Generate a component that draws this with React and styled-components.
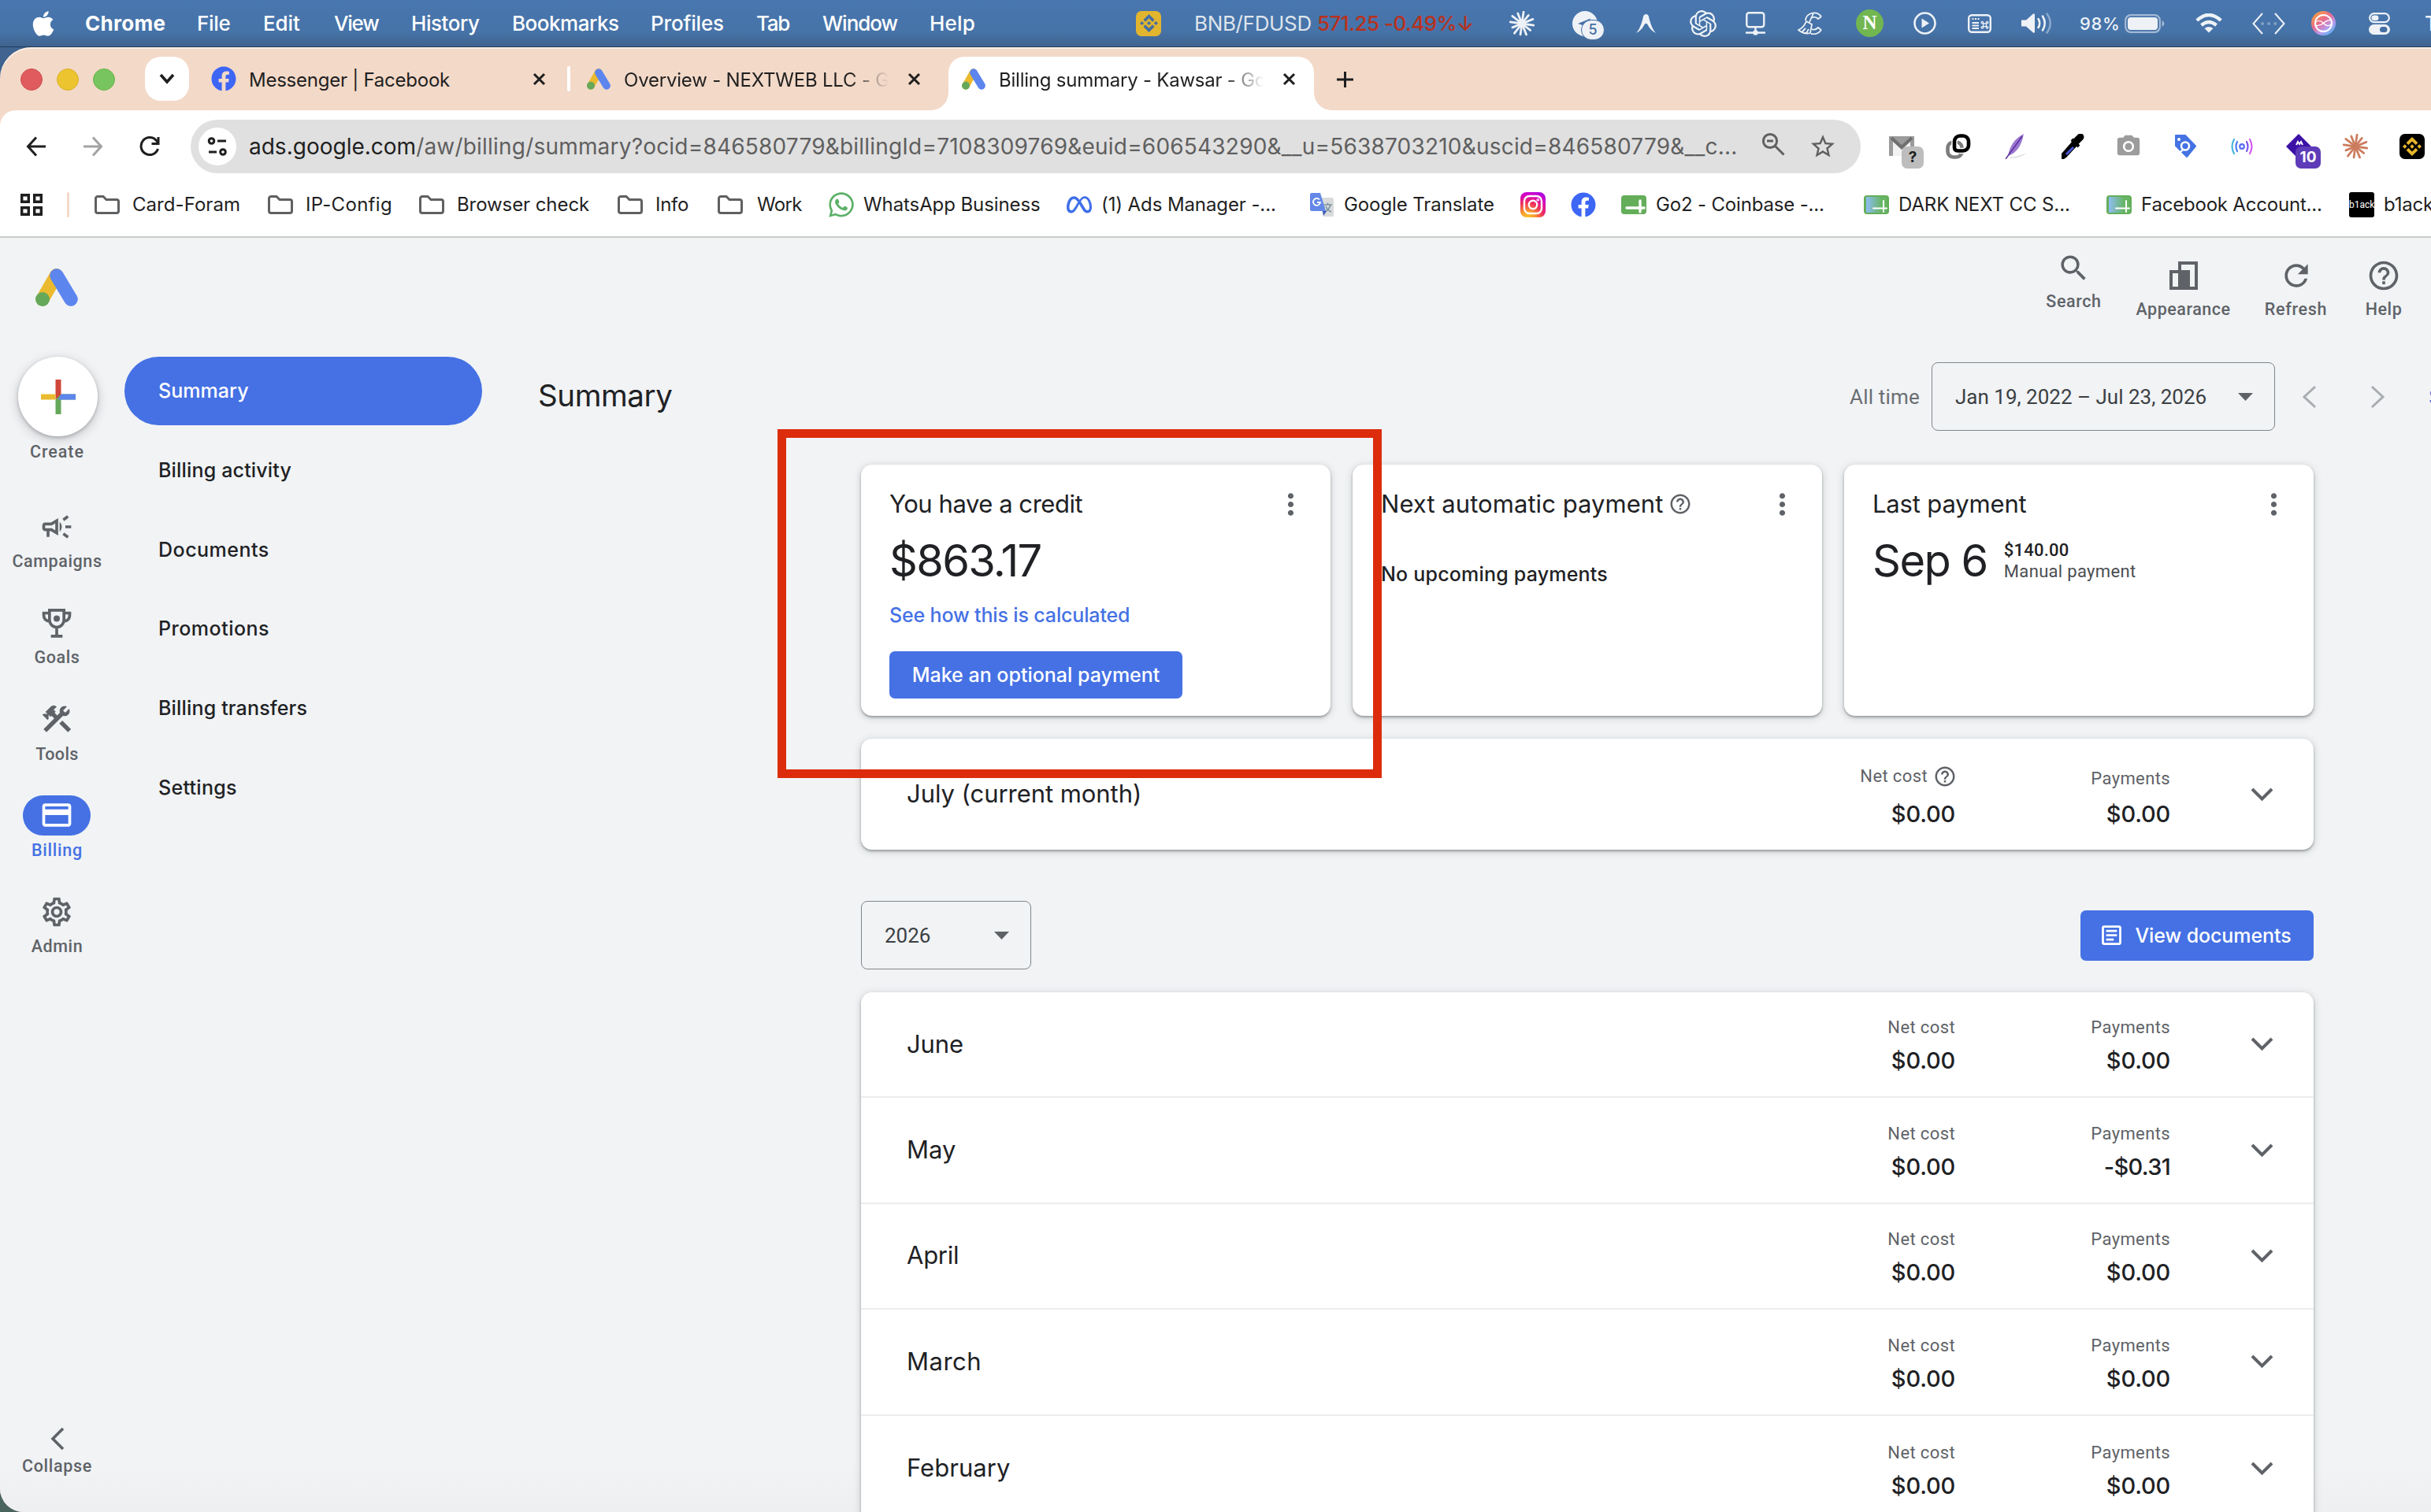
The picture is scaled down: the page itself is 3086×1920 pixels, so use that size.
import React from "react";
import styled, { createGlobalStyle, css } from "styled-components";
import { FaApple, FaFacebook, FaWhatsapp } from "react-icons/fa";
import { FaMeta } from "react-icons/fa6";
import { SiOpenai, SiBinance } from "react-icons/si";
import {
  MdOutlineCampaign, MdConstruction, MdCreditCard, MdOutlineSettings, MdHelpOutline, MdSearch, MdRefresh,
  MdMoreVert, MdPhotoCamera, MdOutlineArticle, MdStarBorder,
} from "react-icons/md";

const sans = `Inter, "Liberation Sans", sans-serif`;
const roboto = `Roboto, "Liberation Sans", sans-serif`;
const blue = "#4571e4";
const ink = "#202124";
const grey = "#5f6368";

const Global = createGlobalStyle`
  * { box-sizing: border-box; }
  html, body { margin: 0; padding: 0; overflow: hidden; }
  svg { display: block; flex: none; }
`;

const Text = styled.span`
  font-family: ${(p) => (p.$roboto ? roboto : sans)};
  font-size: ${(p) => p.$size}px;
  font-weight: ${(p) => p.$weight || 400};
  color: ${(p) => p.$color || ink};
  letter-spacing: ${(p) => p.$ls || 0}px;
  line-height: ${(p) => p.$lh || 30}px;
  white-space: pre;
  flex: none;
`;

const Desktop = styled.div`
  width: 3086px;
  height: 1920px;
  overflow: hidden;
  display: flex;
  flex-direction: column;
  background: linear-gradient(#4876ae 0, #4673a8 40px, #40648f 58px, #3f6290 200px, #4d6b66 1860px, #48645c 1920px);
`;

/* ---------- menu bar ---------- */
const MenuBar = styled.div`
  height: 60px;
  flex: none;
  display: flex;
  align-items: center;
  padding-left: 37px;
  border-bottom: 1px solid #1f3a5e;
`;
const Slot = styled.div`
  width: ${(p) => p.$w}px;
  padding-top: ${(p) => p.$top || 0}px;
  flex: none;
  display: flex;
  align-items: center;
`;
const BadgeHost = styled.div`
  position: relative;
  width: 32px;
  height: 32px;
`;
const CountBubble = styled.span`
  position: absolute;
  left: 11px;
  top: 11px;
  width: 30px;
  height: 26px;
  border-radius: 13px;
  border: 1px solid #456ea2;
  background: #eef2f7;
  color: #47709f;
  font: 500 18px/24px ${sans};
  text-align: center;
`;
const GreenDot = styled.span`
  width: 35px;
  height: 35px;
  border-radius: 50%;
  background: #72b651;
  color: #fff;
  font: 700 25px/34px "Liberation Serif", serif;
  text-align: center;
`;

/* ---------- browser chrome ---------- */
const Window = styled.div`
  flex: 1;
  min-height: 0;
  display: flex;
  flex-direction: column;
  border-radius: 40px 0 0 30px;
  overflow: hidden;
  background: #f3d9c8;
  box-shadow: inset 0 2px 0 #fbeee5;
`;
const TabStrip = styled.div`
  height: 80px;
  flex: none;
  display: flex;
  align-items: center;
  padding-left: 26px;
`;
const Lights = styled.div`
  display: flex;
  gap: 18px;
  padding-top: 2px;
  margin-right: 38px;
`;
const Light = styled.span`
  width: 28px;
  height: 28px;
  border-radius: 50%;
  background: ${(p) => p.$c};
  border: 1px solid ${(p) => p.$b};
`;
const TabMenu = styled.div`
  width: 56px;
  height: 56px;
  border-radius: 20px;
  background: #fff;
  display: flex;
  align-items: center;
  justify-content: center;
`;
const Tab = styled.div`
  width: ${(p) => p.$w}px;
  height: 68px;
  flex: none;
  align-self: flex-end;
  display: flex;
  align-items: center;
  padding: 0 ${(p) => p.$pr}px 12px ${(p) => p.$pl}px;
  ${(p) => p.$active && css`
    position: relative;
    background: #fff;
    border-radius: 20px 20px 0 0;
    &::before, &::after {
      content: "";
      position: absolute;
      bottom: 0;
      width: 22px;
      height: 22px;
    }
    &::before { left: -22px; background: radial-gradient(circle at 0 0, transparent 21.5px, #fff 22px); }
    &::after { right: -22px; background: radial-gradient(circle at 100% 0, transparent 21.5px, #fff 22px); }
  `}
`;
const TabTitle = styled.div`
  flex: 1;
  min-width: 0;
  overflow: hidden;
  padding-top: 4px;
  margin-left: ${(p) => p.$ml}px;
  margin-right: ${(p) => p.$mr}px;
  ${(p) => p.$fade && css`mask-image: linear-gradient(90deg, #000 calc(100% - 50px), transparent);`}
`;
const TabSep = styled.span`
  width: 4px;
  height: 32px;
  border-radius: 2px;
  background: #fff;
`;
const Toolbar = styled.div`
  height: 80px;
  flex: none;
  background: #fff;
  border-radius: 20px 0 0 0;
  display: flex;
  align-items: center;
  padding: 12px 0 0 33px;
`;
const NavButtons = styled.div`
  display: flex;
  gap: 46px;
  width: 209px;
`;
const Omnibox = styled.div`
  width: 2120px;
  height: 68px;
  flex: none;
  border-radius: 34px;
  background: #e0e0e0;
  display: flex;
  align-items: center;
  padding-left: 10px;
`;
const SiteInfo = styled.span`
  width: 48px;
  height: 48px;
  flex: none;
  border-radius: 50%;
  background: #fff;
  display: flex;
  align-items: center;
  justify-content: center;
  margin-right: 16px;
`;
const UrlText = styled.div`
  width: 1920px;
  flex: none;
  display: flex;
`;
const OmniActions = styled.div`
  display: flex;
  gap: 28px;
`;
const Extensions = styled.div`
  display: flex;
  gap: 40px;
  margin-left: 36px;
`;
const ExtIcon = styled.div`
  position: relative;
  width: 32px;
  height: 32px;
  flex: none;
  display: flex;
  align-items: center;
  justify-content: center;
  border-radius: ${(p) => (p.$bg ? 7 : 0)}px;
  background: ${(p) => p.$bg || "none"};
`;
const ExtBadge = styled.span`
  position: absolute;
  left: ${(p) => p.$x}px;
  top: 16px;
  width: ${(p) => p.$w}px;
  height: 28px;
  border-radius: 7px;
  background: ${(p) => p.$bg};
  color: ${(p) => p.$c};
  font: 700 19px/28px ${sans};
  text-align: center;
`;
const Bookmarks = styled.div`
  height: 82px;
  flex: none;
  background: #fff;
  border-bottom: 2px solid #c9ccca;
  display: flex;
  align-items: center;
  padding-left: 26px;
`;
const BookmarkSep = styled.span`
  width: 3px;
  height: 32px;
  flex: none;
  border-radius: 2px;
  background: #f3d9c8;
  margin: 0 32px 0 31px;
`;
const Bookmark = styled.div`
  width: ${(p) => p.$w}px;
  flex: none;
  display: flex;
  align-items: center;
  gap: ${(p) => p.$gap}px;
`;
const BookmarkGlyph = styled.span`
  width: 32px;
  flex: none;
  display: flex;
  justify-content: center;
`;
const BlackIcon = styled.span`
  width: 32px;
  height: 32px;
  border-radius: 3px;
  background: #000;
  color: #fff;
  font: 400 12px/32px ${roboto};
  text-align: center;
  flex: none;
`;
const InstaIcon = styled.span`
  width: 32px;
  height: 32px;
  border-radius: 8px;
  background: radial-gradient(circle at 28% 105%, #fdc830 0, #f8a12c 22%, #ee2f5c 50%, #d300c5 75%, #7a1bff 108%);
  flex: none;
`;

/* ---------- page ---------- */
const Page = styled.div`
  flex: 1;
  min-height: 0;
  background: linear-gradient(#f1f3f5 0, #f1f3f5 calc(100% - 60px), #eeeff1);
  display: flex;
  flex-direction: column;
`;
const PageHeader = styled.div`
  height: 151px;
  flex: none;
  display: flex;
  justify-content: space-between;
  padding: 17px 0 0 45px;
`;
const LogoBox = styled.div`
  padding-top: 22px;
`;
const HeaderActions = styled.div`
  display: flex;
  width: 501px;
`;
const HeaderAction = styled.div`
  width: ${(p) => p.$w}px;
  padding-top: ${(p) => p.$top || 0}px;
  flex: none;
  display: flex;
  flex-direction: column;
  align-items: center;
  gap: 7px;
`;
const Body = styled.div`
  flex: 1;
  min-height: 0;
  display: flex;
`;
const Rail = styled.div`
  width: 158px;
  flex: none;
  padding-right: 13px;
  display: flex;
  flex-direction: column;
  align-items: center;
`;
const CreateButton = styled.div`
  width: 101px;
  height: 101px;
  flex: none;
  margin: 0 0 6px 2px;
  border-radius: 50%;
  background: #fff;
  box-shadow: 0 2px 4px rgba(60, 64, 67, 0.3), 0 4px 12px 3px rgba(60, 64, 67, 0.16);
  display: flex;
  align-items: center;
  justify-content: center;
`;
const RailItem = styled.div`
  height: 122.3px;
  display: flex;
  flex-direction: column;
  align-items: center;
  gap: 5px;
`;
const RailIcon = styled.span`
  width: 86px;
  height: 51px;
  border-radius: 26px;
  background: ${(p) => (p.$on ? blue : "none")};
  color: ${(p) => (p.$on ? "#fff" : grey)};
  display: flex;
  align-items: center;
  justify-content: center;
`;
const RailItems = styled.div`
  padding-top: 55px;
`;
const Collapse = styled.div`
  margin-top: auto;
  padding-bottom: 44px;
  display: flex;
  flex-direction: column;
  align-items: center;
  gap: 6px;
`;
const SideNav = styled.nav`
  width: 454px;
  flex: none;
  display: flex;
  flex-direction: column;
  gap: 13.8px;
`;
const SideLink = styled.a`
  height: 87px;
  flex: none;
  border-radius: 44px;
  background: ${(p) => (p.$on ? blue : "none")};
  display: flex;
  align-items: center;
  padding: 0 0 1px 43px;
`;
const Main = styled.main`
  flex: 1;
  min-width: 0;
  padding: 7px 0 0 71px;
`;
const TitleRow = styled.div`
  height: 87px;
  display: flex;
  align-items: center;
  justify-content: space-between;
`;
const PageTitle = styled.div`
  display: flex;
  padding-bottom: 4px;
`;
const RangeTools = styled.div`
  width: 738px;
  flex: none;
  display: flex;
  align-items: center;
`;
const Select = styled.div`
  width: ${(p) => p.$w}px;
  height: 87px;
  flex: none;
  border: 1.5px solid #80868b;
  border-radius: 8px;
  display: flex;
  align-items: center;
  justify-content: space-between;
  padding: 0 27px 0 29px;
`;
const Pager = styled.div`
  display: flex;
  width: 161px;
  gap: 68px;
  margin-left: 34px;
  flex: none;
`;
const Content = styled.div`
  position: relative;
  margin: 43px 0 0 410px;
  width: 1844px;
`;
const shadow = css`
  background: #fff;
  border-radius: 14px;
  box-shadow: 0 2px 3px rgba(60, 64, 67, 0.42), 0 2px 8px 2px rgba(60, 64, 67, 0.15);
`;
const Cards = styled.div`
  display: grid;
  grid-template-columns: repeat(3, 596px);
  gap: 28px;
`;
const Card = styled.section`
  ${shadow}
  height: 319px;
  padding: 30px 29px 0 36px;
`;
const CardHead = styled.div`
  height: 40px;
  display: flex;
  align-items: center;
  justify-content: space-between;
  color: ${grey};
`;
const WithHelp = styled.div`
  display: flex;
  align-items: center;
  gap: ${(p) => p.$gap}px;
  margin-right: ${(p) => p.$mr || 0}px;
  color: ${grey};
`;
const Block = styled.div`
  display: flex;
  margin-top: ${(p) => p.$mt}px;
`;
const PrimaryButton = styled.div`
  width: ${(p) => p.$w}px;
  height: ${(p) => p.$h}px;
  margin-top: ${(p) => p.$mt || 0}px;
  padding-right: ${(p) => p.$pr || 0}px;
  border-radius: 7px;
  background: ${blue};
  color: #fff;
  display: flex;
  align-items: center;
  justify-content: center;
  gap: 14px;
`;
const PaidDetail = styled.div`
  display: flex;
  flex-direction: column;
  padding: 3px 0 0 21px;
`;
const MonthPanel = styled.section`
  ${shadow}
  margin-top: 29px;
`;
const MonthRow = styled.div`
  height: ${(p) => p.$h}px;
  display: flex;
  align-items: center;
  padding-left: 58px;
  &:not(:last-child) {
    border-bottom: 2px solid #ececee;
  }
`;
const MonthName = styled.div`
  flex: 1;
  padding-bottom: 1px;
`;
const Figure = styled.div`
  width: 273px;
  height: 100%;
  padding-bottom: 25px;
  display: flex;
  flex-direction: column;
  justify-content: flex-end;
  align-items: flex-end;
  gap: ${(p) => p.$gap}px;
`;
const Expand = styled.div`
  width: 182px;
  padding-left: 102px;
`;
const YearRow = styled.div`
  height: 87px;
  margin-top: 65px;
  display: flex;
  align-items: center;
  justify-content: space-between;
`;
const Highlight = styled.div`
  position: absolute;
  left: -106px;
  top: -45px;
  width: 767px;
  height: 443px;
  border: 11px solid #dc2c0c;
`;

/* ---------- drawings ---------- */
const Svg = ({ w, h = w, vb, children, ...r }) => (
  <svg width={w} height={h} viewBox={vb || `0 0 ${w} ${h}`} fill="none" {...r}>{children}</svg>
);
const AdsLogo = ({ w, h }) => (
  <Svg w={w} h={h} vb="0 0 54 48">
    <path d="M26.5 8.5 9 39" stroke="#ebba2f" strokeWidth="17" strokeLinecap="round" />
    <circle cx="9" cy="39" r="9" fill="#66a85a" />
    <path d="M27 9 45 39" stroke="#5c85ee" strokeWidth="17.5" strokeLinecap="round" />
  </Svg>
);
const rays = [15, 13.5, 15, 14, 15.5, 13, 15, 15.5, 14, 15, 13.5, 15];
const Burst = ({ color }) => (
  <Svg w={32}>
    {rays.map((r, i) => {
      const a = ((i * 30 + 8) * Math.PI) / 180;
      return <line key={i} x1="16" y1="16" x2={16 + r * Math.cos(a)} y2={16 + r * Math.sin(a)} stroke={color} strokeWidth="2.8" strokeLinecap="round" />;
    })}
  </Svg>
);
const Chevron = ({ w, h, d, c = grey, s = 4 }) => (
  <Svg w={w} h={h} stroke={c} strokeWidth={s}><path d={d} /></Svg>
);
const Down = () => <Chevron w={29} h={18} d="M2 2 14.5 14.5 27 2" />;
const Close = () => <Chevron w={17} h={17} c="#1f1f1f" s={3} d="M2 2 15 15M15 2 2 15" />;
const Caret = () => <Svg w={19} h={10}><path d="M0 0H19L9.5 10Z" fill={grey} /></Svg>;
const Folder = () => (
  <Svg w={32} h={24} stroke="#5f6062" strokeWidth="3">
    <path d="M1.5 4A2.5 2.5 0 0 1 4 1.5H11L15 5.5H28A2.5 2.5 0 0 1 30.5 8V20A2.5 2.5 0 0 1 28 22.5H4A2.5 2.5 0 0 1 1.5 20Z" />
  </Svg>
);
const Sheet = ({ tint }) => (
  <Svg w={32} h={24}>
    <defs><linearGradient id="tint"><stop stopColor="#8fbdf5" /><stop offset=".75" stopColor="#66b565" /></linearGradient></defs>
    <rect width="32" height="24" rx="4" fill="#64ae5a" />
    {tint && <rect x="3" y="2" width="26" height="20" fill="url(#tint)" />}
    <path d={tint ? "M12 16.5H29M25 7V21" : "M7 16H29M24 7V21"} stroke="#fff" strokeWidth={tint ? 2 : 3.4} strokeLinecap="round" />
  </Svg>
);

const menus = [
  ["File", 84, -0.3], ["Edit", 90, -0.1], ["View", 98, -1.2], ["History", 128, -0.45], ["Bookmarks", 176, -0.48],
  ["Profiles", 134, -0.18], ["Tab", 84, -1.3], ["Window", 136, -1], ["Help", 262, 0.2],
];

const StatusIcons = () => (
  <>
    <Slot $w={80}><Burst color="#eef2f7" /></Slot>
    <Slot $w={81}>
      <BadgeHost>
        <Svg w={32}><circle cx="16" cy="16" r="16" fill="#eef2f7" /><path d="M7 16 23 9.5 20 21 13 18Z" fill="#456ea2" /></Svg>
        <CountBubble>5</CountBubble>
      </BadgeHost>
    </Slot>
    <Slot $w={68}><Svg w={25} h={24}><path d="M0 24C5 19 8 8 9 3Q10 0 12.5 0T16 3C17 8 20 19 25 24C20 21.5 17 18 15 14Q12.5 9.5 10 14C8 18 5 21.5 0 24Z" fill="#eef2f7" /></Svg></Slot>
    <Slot $w={71}><SiOpenai size={34} color="#eef2f7" /></Slot>
    <Slot $w={66}>
      <Svg w={25} h={30} stroke="#eef2f7" strokeWidth="2.4"><rect x="1.3" y="1.3" width="22" height="18" rx="3" /><path d="M12.5 19.5V26M0 26.5H25" /><circle cx="12.5" cy="26.5" r="2" fill="#eef2f7" /></Svg>
    </Slot>
    <Slot $w={74}>
      <Svg w={32} h={29} stroke="#eef2f7" strokeWidth="1.8">
        <path d="M30 6C27 2 22 .5 17 2C12 4 10 8 10 11M30 6 26 9C23 6 20 6 17 8M30 23C27 27 22 29 17 28M30 23 26 20C23 23 20 23 18 22" />
        <path d="M20 2 15 13M11 12 18 16 16 27Q8 29 1 23Q8 20 11 12ZM6 25 10 21M11 27 14 22" />
      </Svg>
    </Slot>
    <Slot $w={73}><GreenDot>N</GreenDot></Slot>
    <Slot $w={69}><Svg w={29}><circle cx="14.5" cy="14.5" r="13" stroke="#eef2f7" strokeWidth="2.6" /><path d="M10.5 8.5V20.5L20 14.5Z" fill="#eef2f7" /></Svg></Slot>
    <Slot $w={68}>
      <Svg w={30} h={24} stroke="#eef2f7" strokeWidth="2">
        <rect x="1.2" y="1.2" width="27.6" height="21.6" rx="4" strokeWidth="2.4" />
        <path d="M5.5 6H15" strokeDasharray="2 1.5" /><path d="M5.5 11H14M5.5 14.5H14M5.5 18H14" />
        <path d="M19.6 11.8H23.4V15.6H19.6Z" strokeWidth="1.3" />
        <path d="M19.6 11.8H18.6A1.2 1.2 0 1 1 19.6 10.6ZM23.4 11.8V10.6A1.2 1.2 0 1 1 24.6 11.8ZM19.6 15.6V16.8A1.2 1.2 0 1 1 18.4 15.6ZM23.4 15.6H24.6A1.2 1.2 0 1 1 23.4 16.8Z" strokeWidth="1.3" />
      </Svg>
    </Slot>
    <Slot $w={74}>
      <Svg w={40} h={27}><path d="M0 9.5H6L15 1.5Q17 .5 17 3V24Q17 26.5 15 25.5L6 17.5H0Z" fill="#eef2f7" /><path d="M21.5 8Q25 13.5 21.5 19M27 4.5Q32.5 13.5 27 22.5" stroke="#eef2f7" strokeWidth="2.6" strokeLinecap="round" /><path d="M32.5 1.5Q41 13.5 32.5 25.5" stroke="#8aa8cb" strokeWidth="2.6" strokeLinecap="round" /></Svg>
    </Slot>
    <Slot $w={57}><Text $size={22} $weight={500} $color="#eef2f7" $ls={0.6}>98%</Text></Slot>
    <Slot $w={90}>
      <Svg w={52} h={24}><rect x="1.2" y="1.2" width="43.6" height="21.6" rx="6.5" stroke="#a3b9d4" strokeWidth="2.2" /><rect x="4" y="4" width="38" height="16" rx="4" fill="#eef2f7" /><path d="M47.5 8V16Q50.5 14.5 50.5 12T47.5 8Z" fill="#a3b9d4" /></Svg>
    </Slot>
    <Slot $w={72}>
      <Svg w={34} h={25} stroke="#eef2f7" strokeWidth="4.4"><path d="M1.8 9Q17-5 32.2 9" /><path d="M7.5 15Q17 7 26.5 15" /><path d="M17 24.5 11.5 19Q17 15 22.5 19Z" fill="#eef2f7" stroke="none" /></Svg>
    </Slot>
    <Slot $w={75}>
      <Svg w={42} h={28} stroke="#eef2f7" strokeWidth="2"><path d="M13 1 1.5 14 13 27M29 1 40.5 14 29 27" /><path d="M13 14H31" stroke="#7f9fc6" strokeWidth="4" strokeLinecap="round" strokeDasharray="0.1 8" /></Svg>
    </Slot>
    <Slot $w={73}>
      <Svg w={31}>
        <defs><linearGradient id="siri" x1=".1" y1=".1" x2=".8" y2="1"><stop stopColor="#f5a13c" /><stop offset=".4" stopColor="#ea6a8f" /><stop offset=".7" stopColor="#b79cf0" /><stop offset="1" stopColor="#53b4ee" /></linearGradient></defs>
        <circle cx="15.5" cy="15.5" r="15.5" fill="url(#siri)" /><circle cx="15.5" cy="15.5" r="10.5" stroke="#fff" strokeWidth="2" />
        <path d="M5.500 14C9 11.500 13 12.500 15.500 15.500S22 20 25.500 17M6 18.500C10 19 13 17.500 15.500 15.500S21 10.500 24.500 12" stroke="#fff" strokeWidth="1.3" />
      </Svg>
    </Slot>
    <Slot $w={71}>
      <Svg w={28}><rect x="1.2" y="1.2" width="24.6" height="11" rx="5.5" stroke="#eef2f7" strokeWidth="2.2" /><rect x="3.5" y="3.5" width="9" height="6.5" rx="3.2" fill="#eef2f7" /><rect x="0" y="15" width="27" height="13" rx="6.5" fill="#eef2f7" /><rect x="14" y="18" width="9.5" height="7" rx="3.5" fill="#456ea2" /></Svg>
    </Slot>
    <Text $size={26} $weight={500} $color="#eef2f7">T</Text>
  </>
);

const bookmarks = [
  ["Card-Foram", 220, "f", 0.05, 16], ["IP-Config", 192, "f", 0.3, 16], ["Browser check", 252, "f", -0.08, 16], ["Info", 127, "f", -0.27, 16], ["Work", 141, "f", -0.7, 18],
  ["WhatsApp Business", 302, "wa", -0.09, 12], ["(1) Ads Manager -...", 308, "meta", -0.1, 12], ["Google Translate", 268, "tr", -0.09, 12], ["", 64, "ig"], ["", 64, "fb"],
  ["Go2 - Coinbase -...", 308, "s", -0.17, 12], ["DARK NEXT CC S...", 308, "st", -0.1, 12], ["Facebook Account...", 308, "st", -0.2, 12], ["b1ack", 110, "b", -0.2, 12],
];
const BookmarkIcon = ({ kind }) => {
  if (kind === "f") return <Folder />;
  if (kind === "wa") return <FaWhatsapp size={36} color="#5cb068" />;
  if (kind === "meta") return <FaMeta size={32} color="#3f6fe8" />;
  if (kind === "fb") return <FaFacebook size={32} color="#3d66f5" />;
  if (kind === "b") return <BlackIcon>b1ack</BlackIcon>;
  if (kind === "ig")
    return <InstaIcon><Svg w={32} stroke="#fff" strokeWidth="2.4"><rect x="5" y="5" width="22" height="22" rx="6.5" /><circle cx="16" cy="16" r="5.2" /><circle cx="22.3" cy="9.7" r=".6" /></Svg></InstaIcon>;
  if (kind === "tr")
    return (
      <Svg w={32}>
        <path d="M12 7H29Q31 7 31 9V29Q31 31 29 31H18Z" fill="#d9dadc" /><path d="M18 16H29M23.5 13.5V16M27 16Q25.5 22 20 25M21 18Q23 23 28 25" stroke="#7a95a0" strokeWidth="1.6" />
        <path d="M17 24H22L18 30Z" fill="#3a56b8" /><path d="M3 1H14L21 24H3Q1 24 1 22V3Q1 1 3 1Z" fill="#6488e8" /><path d="M13 9.5A4.5 4.5 0 1 0 14 13H10" stroke="#fff" strokeWidth="1.8" />
      </Svg>
    );
  return <Sheet tint={kind === "st"} />;
};

const BrowserChrome = () => (
  <>
    <TabStrip>
      <Lights><Light $c="#df5b5e" $b="#cf4a50" /><Light $c="#ecc42f" $b="#d9b02a" /><Light $c="#78c55f" $b="#66b44c" /></Lights>
      <TabMenu><Chevron w={20} h={14} c="#1f1f1f" s={3.6} d="M2 2 10 11 18 2" /></TabMenu>
      <Tab $w={480} $pl={28} $pr={27}>
        <FaFacebook size={32} color="#3d66f5" />
        <TabTitle $ml={16} $mr={10}><Text $size={24} $color="#1f1f1f" $ls={-0.24}>Messenger | Facebook</Text></TabTitle>
        <Close />
      </Tab>
      <TabSep />
      <Tab $w={480} $pl={21} $pr={35}>
        <AdsLogo w={30} h={27} />
        <TabTitle $ml={17} $mr={24} $fade><Text $size={24} $color="#1f1f1f" $ls={-0.2}>Overview - NEXTWEB LLC - Go</Text></TabTitle>
        <Close />
      </Tab>
      <Tab $active $w={464} $pl={17} $pr={23}>
        <AdsLogo w={30} h={27} />
        <TabTitle $ml={17} $mr={24} $fade><Text $size={24} $color="#1f1f1f" $ls={-0.23}>Billing summary - Kawsar - Goo</Text></TabTitle>
        <Close />
      </Tab>
      <Slot $w={80} $top={1}><Svg w={78} h={20} stroke="#1f1f1f" strokeWidth="3"><path d="M29 10H50M39.5 0V20" /></Svg></Slot>
    </TabStrip>
    <Toolbar>
      <NavButtons>
        <Svg w={26} stroke="#1f1f1f" strokeWidth="3"><path d="M13 1.5 2.5 13 13 24.5M2.5 13H25" /></Svg>
        <Svg w={26} stroke="#a3a3a3" strokeWidth="3"><path d="M13 1.5 23.5 13 13 24.5M23.5 13H1" /></Svg>
        <Svg w={26} stroke="#1f1f1f" strokeWidth="3"><path d="M23.5 16A11 11 0 1 1 21.5 5.5L24 9M24 1V9.5H15.5" /></Svg>
      </NavButtons>
      <Omnibox>
        <SiteInfo><Svg w={26} h={24} stroke="#1f1f1f" strokeWidth="3"><circle cx="5.5" cy="5" r="3.3" /><path d="M13 5H24M2 19H12" /><circle cx="20" cy="19" r="3.3" /></Svg></SiteInfo>
        <UrlText>
          <Text $size={28} $lh={40} $color="#1f1f1f">ads.google.com</Text>
          <Text $size={28} $lh={40} $color="#5f5f5f" $ls={0.2}>/aw/billing/summary?ocid=846580779&billingId=7108309769&euid=606543290&__u=5638703210&uscid=846580779&__c...</Text>
        </UrlText>
        <OmniActions>
          <Svg w={32} stroke="#5f5f5f" strokeWidth="3"><circle cx="11" cy="11" r="8.6" /><path d="M7 11H15M17 17 28.5 28.5" /></Svg>
          <MdStarBorder size={36} color="#5f5f5f" />
        </OmniActions>
      </Omnibox>
      <Extensions>
        <ExtIcon><Svg w={32}><rect y="3" width="32" height="25" fill="#9b9b9b" /><path d="M5 28V10L16 20 27 10V28Z" fill="#f2f2f2" /><path d="M3 5 16 17 29 5" stroke="#6f6f6f" strokeWidth="4" /></Svg><ExtBadge $x={16} $w={28} $bg="#bdbdbd" $c="#1f1f1f">?</ExtBadge></ExtIcon>
        <ExtIcon>
          <Svg w={32} strokeWidth="4.6">
            <rect x="2.500" y="10.500" width="18" height="19" rx="7" stroke="#7c7c7c" />
            <path d="M11 16V9.500A7 7 0 0 1 18 2.500H22A7 7 0 0 1 29 9.500V14.500A7 7 0 0 1 22 21.500H18" stroke="#fff" strokeWidth="7.500" />
            <path d="M11 17V9.500A7 7 0 0 1 18 2.500H22A7 7 0 0 1 29 9.500V14.500A7 7 0 0 1 22 21.500H15.500Q11 21.500 11 17" stroke="#000" />
          </Svg>
        </ExtIcon>
        <ExtIcon><Svg w={32}><path d="M27 0C24 16 18 24 7 28C9 16 15 6 27 0Z" fill="#9a78cf" /><path d="M4 32 25 3" stroke="#5d2f9e" strokeWidth="1.5" /><path d="M10 30Q20 29 31 24Q22 31 10 31Z" fill="#d8d8d8" /></Svg></ExtIcon>
        <ExtIcon><Svg w={32}><path d="M3 32V25L17 9 23 15 9 30 6 32Z" fill="#000" /><path d="M8 25 17 16 19 18 10 27Z" fill="#4a58d6" /><path d="M16 7 25 16" stroke="#000" strokeWidth="4" /><path d="M20 11 27 4" stroke="#000" strokeWidth="9" strokeLinecap="round" /></Svg></ExtIcon>
        <ExtIcon><MdPhotoCamera size={34} color="#9c9c9c" /></ExtIcon>
        <ExtIcon><Svg w={32}><path d="M4 2H16L29 15.5 18 29 4 15Z" fill="#4573e3" stroke="#4573e3" strokeWidth="2" strokeLinejoin="round" /><circle cx="8" cy="7" r="2" fill="#fff" /><circle cx="16" cy="15.5" r="5" stroke="#fff" strokeWidth="2.6" /><path d="M13 20 10 23" stroke="#fff" strokeWidth="2.4" /></Svg></ExtIcon>
        <ExtIcon><Svg w={28} h={22} strokeWidth="2.2" strokeLinecap="round"><circle cx="14" cy="11" r="2.8" stroke="#5a6cf0" /><path d="M8 5Q5 11 8 17" stroke="#4b7cf0" /><path d="M4 2Q-1 11 4 20" stroke="#49b7dc" /><path d="M20 5Q23 11 20 17" stroke="#7a55f0" /><path d="M24 2Q29 11 24 20" stroke="#d15cf0" /></Svg></ExtIcon>
        <ExtIcon><Svg w={32}><path d="M16 0 32 16 16 32 0 16Z" fill="#3c11a6" /><path d="M13 14 15 10 17 13 19 10 21 14" stroke="#fff" strokeWidth="2" /></Svg><ExtBadge $x={12} $w={32} $bg="#5e3bb8" $c="#fff">10</ExtBadge></ExtIcon>
        <ExtIcon><Burst color="#cc7d5f" /></ExtIcon>
        <ExtIcon $bg="#000"><SiBinance size={24} color="#e8b62a" /></ExtIcon>
      </Extensions>
    </Toolbar>
    <Bookmarks>
      <Svg w={28} stroke="#1f1f1f" strokeWidth="3.4"><path d="M1.7 1.7H10.3V10.3H1.7ZM17.7 1.7H26.3V10.3H17.7ZM1.7 17.7H10.3V26.3H1.7ZM17.7 17.7H26.3V26.3H17.7Z" /></Svg>
      <BookmarkSep />
      {bookmarks.map(([label, w, kind, ls, gap], i) => (
        <Bookmark key={i} $w={w} $gap={gap || 0}>
          <BookmarkGlyph><BookmarkIcon kind={kind} /></BookmarkGlyph>
          {label && <Text $size={24} $color="#1f1f1f" $ls={ls}>{label}</Text>}
        </Bookmark>
      ))}
    </Bookmarks>
  </>
);

const RailLabel = ({ children, c, ls = 0.6 }) => <Text $roboto $size={21.5} $weight={500} $lh={28} $color={c || grey} $ls={ls}>{children}</Text>;
const Trophy = () => (
  <Svg w={44} vb="0 0 24 24" stroke="currentColor" strokeWidth="2">
    <path d="M7 3.2H17V10A5 5 0 0 1 7 10ZM7 5.2H3V6.5Q3 10.5 7.6 11M17 5.2H21V6.5Q21 10.5 16.4 11M12 15V20.8M8 21.2H16" /><circle cx="12" cy="9" r="1.2" fill="currentColor" />
  </Svg>
);
const railItems = [
  ["Campaigns", MdOutlineCampaign, 0.6], ["Goals", Trophy, 0.62], ["Tools", MdConstruction, 0.4], ["Billing", MdCreditCard, 0.76], ["Admin", MdOutlineSettings, 0.61],
];
const sideLinks = [["Summary", 0.05], ["Billing activity", 0.17], ["Documents", 0.5], ["Promotions", 0.5], ["Billing transfers", 0.17], ["Settings", 0.3]];

const months = [["June", "$0.00", -0.11], ["May", "-$0.31", 0.02], ["April", "$0.00", -0.26], ["March", "$0.00", 0.5], ["February", "$0.00", 0.04]];
const Small = ({ children }) => <Text $roboto $size={22} $lh={26} $color={grey} $ls={0.38}>{children}</Text>;
const Money = ({ children, ls = -0.2 }) => <Text $size={29} $weight={500} $lh={40} $ls={ls}>{children}</Text>;
const CardTitle = ({ children, ls }) => <Text $size={31} $lh={40} $ls={ls}>{children}</Text>;
const Dots = () => <MdMoreVert size={43} />;

const Month = ({ name, paid, h, ls, help }) => (
  <MonthRow $h={h}>
    <MonthName><CardTitle ls={ls}>{name}</CardTitle></MonthName>
    <Figure $gap={help ? 13 : 9}>
      {help ? <WithHelp $gap={7} $mr={-2}><Small>Net cost</Small><MdHelpOutline size={30} /></WithHelp> : <Small>Net cost</Small>}
      <Money>$0.00</Money>
    </Figure>
    <Figure $gap={help ? 12 : 9}><Small>Payments</Small><Money ls={paid[0] === "-" ? -0.7 : -0.2}>{paid}</Money></Figure>
    <Expand><Down /></Expand>
  </MonthRow>
);

export default function App() {
  return (
    <Desktop>
      <Global />
      <MenuBar>
        <Slot $w={71}><FaApple size={36} color="#fff" /></Slot>
        <Slot $w={142}><Text $size={26} $weight={700} $color="#fff" $ls={0.3}>Chrome</Text></Slot>
        {menus.map(([m, w, ls]) => <Slot key={m} $w={w}><Text $size={26} $weight={500} $color="#fff" $ls={ls}>{m}</Text></Slot>)}
        <Slot $w={74}><ExtIcon $bg="#e2b52e"><SiBinance size={23} color="#456ea2" /></ExtIcon></Slot>
        <Slot $w={156}><Text $size={26} $color="#dfe5ec" $ls={-0.34}>BNB/FDUSD</Text></Slot>
        <Slot $w={244}><Text $size={26} $weight={500} $color="#b8311c" $ls={-0.53}>571.25 -0.49%↓</Text></Slot>
        <StatusIcons />
      </MenuBar>
      <Window>
        <BrowserChrome />
        <Page>
          <PageHeader>
            <LogoBox><AdsLogo w={54} h={48} /></LogoBox>
            <HeaderActions>
              <HeaderAction $w={95}><MdSearch size={43} color={grey} /><RailLabel>Search</RailLabel></HeaderAction>
              <HeaderAction $w={183} $top={9}><Svg w={44} stroke={grey} strokeWidth="4"><path d="M17 15V6H38V38H6V17H17" /><rect x="17" y="17" width="11" height="21" fill={grey} /></Svg><RailLabel ls={0.52}>Appearance</RailLabel></HeaderAction>
              <HeaderAction $w={103} $top={9}><MdRefresh size={44} color={grey} /><RailLabel ls={0.7}>Refresh</RailLabel></HeaderAction>
              <HeaderAction $w={120} $top={9}><MdHelpOutline size={44} color={grey} /><RailLabel>Help</RailLabel></HeaderAction>
            </HeaderActions>
          </PageHeader>
          <Body>
            <Rail>
              <CreateButton><Svg w={44}><path d="M18.5 0H25.5V22L18.5 25Z" fill="#d0463a" /><path d="M0 18.5H18.5V25.5H0Z" fill="#eabb2f" /><path d="M18.5 25.5 25.5 18.5H44V25.5H25.5V44H18.5Z" fill="#66a85a" /><path d="M25.5 18.5H44V25.5H22Z" fill="#5c85ee" /></Svg></CreateButton>
              <RailLabel ls={0.95}>Create</RailLabel>
              <RailItems>
                {railItems.map(([label, Icon, ls]) => (
                  <RailItem key={label}>
                    <RailIcon $on={label === "Billing"}><Icon size={44} /></RailIcon>
                    <RailLabel ls={ls} c={label === "Billing" ? blue : grey}>{label}</RailLabel>
                  </RailItem>
                ))}
              </RailItems>
              <Collapse><Chevron w={18} h={30} s={3.6} d="M16 2 3 15 16 28" /><RailLabel ls={0.72}>Collapse</RailLabel></Collapse>
            </Rail>
            <SideNav>
              {sideLinks.map(([label, ls], i) => (
                <SideLink key={label} $on={i === 0}><Text $size={25} $weight={500} $ls={ls} $color={i ? ink : "#fff"}>{label}</Text></SideLink>
              ))}
            </SideNav>
            <Main>
              <TitleRow>
                <PageTitle><Text $size={38.5} $lh={50} $ls={-0.4}>Summary</Text></PageTitle>
                <RangeTools>
                  <Slot $w={104}><Text $roboto $size={26} $color="#6a6e73" $ls={0.19}>All time</Text></Slot>
                  <Select $w={436}><Text $roboto $size={26} $color="#3c4043">Jan 19, 2022 – Jul 23, 2026</Text><Caret /></Select>
                  <Pager><Chevron w={19} h={30} c="#a9acb0" s={3} d="M17 2 3 15 17 28" /><Chevron w={19} h={30} c="#a9acb0" s={3} d="M2 2 16 15 2 28" /></Pager>
                  <Text $size={26} $weight={500} $color={blue}>S</Text>
                </RangeTools>
              </TitleRow>
              <Content>
                <Cards>
                  <Card>
                    <CardHead><CardTitle ls={-0.45}>You have a credit</CardTitle><Dots /></CardHead>
                    <Block $mt={22}><Text $size={56} $lh={60} $ls={-1.7}>$863.17</Text></Block>
                    <Block $mt={24}><Text $size={25} $weight={500} $color={blue} $ls={-0.15}>See how this is calculated</Text></Block>
                    <PrimaryButton $w={372} $h={60} $mt={31}><Text $size={25} $weight={500} $color="#fff">Make an optional payment</Text></PrimaryButton>
                  </Card>
                  <Card>
                    <CardHead><WithHelp $gap={7}><CardTitle ls={0.05}>Next automatic payment</CardTitle><MdHelpOutline size={30} /></WithHelp><Dots /></CardHead>
                    <Block $mt={54}><Text $size={25} $weight={500} $ls={0.2}>No upcoming payments</Text></Block>
                  </Card>
                  <Card>
                    <CardHead><CardTitle ls={-0.16}>Last payment</CardTitle><Dots /></CardHead>
                    <Block $mt={22}>
                      <Text $size={56} $lh={60} $ls={-1.5}>Sep 6</Text>
                      <PaidDetail>
                        <Text $roboto $size={22} $weight={500} $lh={27} $ls={0.23}>$140.00</Text>
                        <Text $roboto $size={22} $lh={27} $color="#4a4d51" $ls={0.32}>Manual payment</Text>
                      </PaidDetail>
                    </Block>
                  </Card>
                </Cards>
                <MonthPanel><Month name="July (current month)" paid="$0.00" h={141} help ls={-0.05} /></MonthPanel>
                <YearRow>
                  <Select $w={216}><Text $roboto $size={26} $color="#3c4043">2026</Text><Caret /></Select>
                  <PrimaryButton $w={296} $h={64} $pr={6}><MdOutlineArticle size={33} /><Text $size={25} $weight={500} $color="#fff" $ls={-0.1}>View documents</Text></PrimaryButton>
                </YearRow>
                <MonthPanel>
                  {months.map(([m, paid, ls]) => <Month key={m} name={m} paid={paid} ls={ls} h={134.4} />)}
                </MonthPanel>
                <Highlight />
              </Content>
            </Main>
          </Body>
        </Page>
      </Window>
    </Desktop>
  );
}
